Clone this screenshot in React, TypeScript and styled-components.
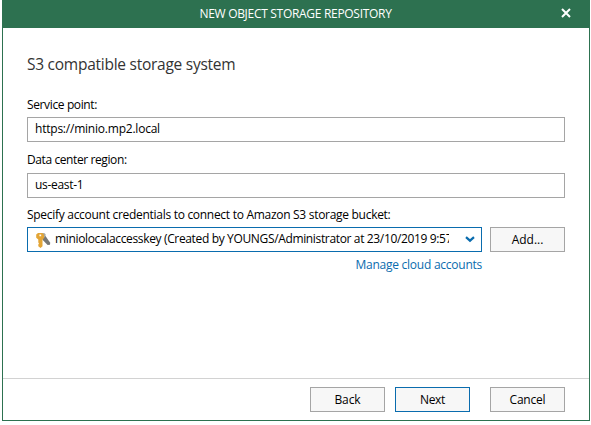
import React from "react";
import styled, { createGlobalStyle } from "styled-components";

const GlobalStyle = createGlobalStyle`
  * { box-sizing: border-box; }
  body { margin: 0; background: #fff; font-family: "Open Sans", "Noto Sans", sans-serif; font-size: 12px; color: #000; }
`;

const Dialog = styled.div`
  display: flex;
  flex-direction: column;
  width: 588px;
  height: 421px;
  margin-left: 2px;
  background: #fff;
  border: 1px solid #2d7150;
  border-top: 0;
`;

const TitleBar = styled.header`
  display: grid;
  grid-template-columns: 45px 1fr 46px;
  align-items: center;
  height: 28px;
  flex: none;
  background: #2d7150;
  color: #fff;
  text-align: center;
`;

const Text = styled.span<{ $spacing?: number }>`
  font-size: 12px;
  letter-spacing: ${(p) => p.$spacing ?? 0}px;
  line-height: 16px;
  white-space: nowrap;
`;

const CloseButton = styled.button`
  display: flex;
  align-items: center;
  justify-content: center;
  height: 28px;
  padding: 0 0 2px;
  border: 0;
  background: none;
`;

const Content = styled.main`
  flex: 1;
  padding: 24px 24px 0;
`;

const Heading = styled.h1`
  margin: 0 0 21px;
  height: 24px;
  font-size: 15.5px;
  line-height: 24px;
  font-weight: 400;
  letter-spacing: -0.26px;
  color: #333;
  white-space: nowrap;
`;

const Field = styled.div<{ $labelGap?: number }>`
  display: grid;
  grid-template-rows: 16px 25px;
  row-gap: ${(p) => p.$labelGap ?? 4}px;
  margin-bottom: 10px;
  & + & + & { margin-top: -1px; }
`;

const Label = styled.label`
  display: flex;
`;

const Box = styled.div`
  display: flex;
  align-items: center;
  height: 25px;
  padding: 0 7px 1px;
  border: 1px solid #a5a5a5;
`;

const Row = styled.div`
  display: flex;
  gap: 8px;
`;

const Combo = styled(Box)`
  width: 455px;
  padding: 0 6px 0 7px;
  border-color: #0a6cae;
`;

const ComboText = styled.div`
  display: flex;
  width: 394px;
  height: 16px;
  margin: 0 auto 1px 4px;
  overflow: hidden;
`;

const Button = styled.button<{ $primary?: boolean }>`
  display: flex;
  align-items: center;
  justify-content: center;
  width: 75px;
  height: 25px;
  padding: 0;
  border: 1px solid ${(p) => (p.$primary ? "#0a6cae" : "#a5a5a5")};
  background: #f7f7f7;
  color: #000;
  font-family: inherit;
`;

const Link = styled.a`
  display: flex;
  justify-content: flex-end;
  width: 455px;
  margin-top: -5px;
  color: #0a6cae;
`;

const Footer = styled.footer`
  display: flex;
  flex: none;
  height: 42px;
  padding: 8px 24px 0;
  justify-content: flex-end;
  gap: 10px;
  border-top: 1px solid #d2d2d2;
  ${Button}:last-child { margin-left: 10px; }
`;

const CloseIcon = () => (
  <svg width="10" height="10" viewBox="0 0 10 10">
    <path d="M1 1L9 9M9 1L1 9" stroke="#fff" strokeWidth="2" />
  </svg>
);

const KeysIcon = () => (
  <svg width="16" height="16" viewBox="0 0 16 16">
    <path d="M7.5 5l2.8-1.2 4.9 7-.2 2-2.4.1-5.1-5.1z" fill="#767776" />
    <path d="M6.5 1.2q3-.8 4.2 1.2l-.6 2.6-3.5 2z" fill="#aaa99e" />
    <path
      fillRule="evenodd"
      d="M3 .9h4.4L9 2.8v3.1L7.5 7.5v6.8L5.5 16 3.3 14.3V12.5l.7-1-.7-1V7.4L1.2 5.8V2.6zM4.4 2.5v1.8h1.9V2.5z"
      fill="#e3a536"
    />
  </svg>
);

const ChevronIcon = () => (
  <svg width="10" height="7" viewBox="0 0 10 7">
    <path d="M1 1.2L5 4.7 9 1.2" fill="none" stroke="#0a6cae" strokeWidth="2.2" />
  </svg>
);

export default function App() {
  return (
    <>
      <GlobalStyle />
      <Dialog>
        <TitleBar>
          <span />
          <Text $spacing={-0.3}>NEW OBJECT STORAGE REPOSITORY</Text>
          <CloseButton aria-label="Close"><CloseIcon /></CloseButton>
        </TitleBar>
        <Content>
          <Heading>S3 compatible storage system</Heading>
          <Field>
            <Label><Text $spacing={-0.37}>Service point:</Text></Label>
            <Box><Text $spacing={-0.22}>https://minio.mp2.local</Text></Box>
          </Field>
          <Field $labelGap={5}>
            <Label><Text $spacing={-0.4}>Data center region:</Text></Label>
            <Box><Text $spacing={-0.3}>us-east-1</Text></Box>
          </Field>
          <Field>
            <Label><Text $spacing={-0.29}>Specify account credentials to connect to Amazon S3 storage bucket:</Text></Label>
            <Row>
              <Combo>
                <KeysIcon />
                <ComboText>
                  <Text $spacing={-0.35}>miniolocalaccesskey (Created by YOUNGS/Administrator at 23/10/2019 9:57)</Text>
                </ComboText>
                <ChevronIcon />
              </Combo>
              <Button><Text>Add...</Text></Button>
            </Row>
          </Field>
          <Link><Text $spacing={-0.25}>Manage cloud accounts</Text></Link>
        </Content>
        <Footer>
          <Button><Text $spacing={-0.1}>Back</Text></Button>
          <Button $primary><Text $spacing={-0.3}>Next</Text></Button>
          <Button><Text $spacing={-0.2}>Cancel</Text></Button>
        </Footer>
      </Dialog>
    </>
  );
}
